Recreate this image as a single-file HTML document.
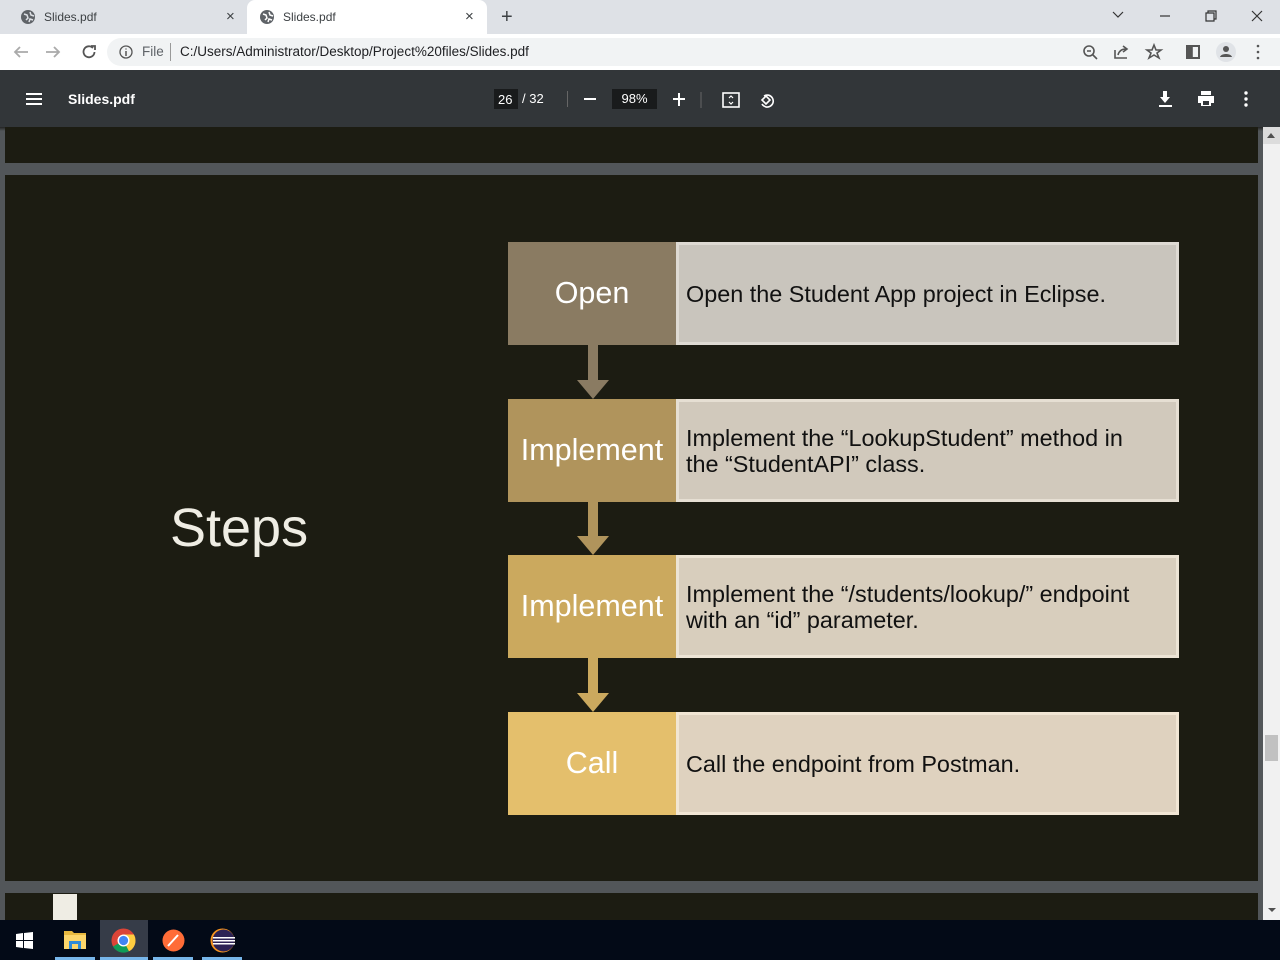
<!DOCTYPE html>
<html><head><meta charset="utf-8"><style>
*{margin:0;padding:0;box-sizing:border-box}
body{width:1280px;height:960px;overflow:hidden;font-family:"Liberation Sans",sans-serif;background:#525659;position:relative}
.abs{position:absolute}
.tabbar{left:0;top:0;width:1280px;height:34px;background:#dee1e6}
.tab{top:0;height:34px;font-size:12px;color:#3c4043;line-height:34px}
.addr{left:0;top:34px;width:1280px;height:36px;background:#fff}
.omni{left:107px;top:38px;width:1200px;height:28px;border-radius:14px;background:#f1f3f4}
.pdfbar{left:0;top:70px;width:1280px;height:57px;background:#323639;color:#fff}
.page{left:5px;background:#1c1c12}
.lbox{left:508px;width:168px;height:103px;color:#fff;font-size:30.5px;text-align:center;display:flex;align-items:center;justify-content:center}
.rbox{left:676px;width:503px;height:103px;border:3px solid;font-size:23.4px;color:#111;display:flex;align-items:center;padding-left:7px;line-height:26px}
.shaft{left:588px;width:10px}
.head{left:577px;width:0;height:0;border-left:16px solid transparent;border-right:16px solid transparent;border-top:19px solid}
.task{left:0;top:920px;width:1280px;height:40px;background:#030a17}
.ul{top:957px;height:3px;background:#77b6ea}
</style></head><body>
<div class="abs tabbar"></div>
<div class="abs" style="left:247px;top:0;width:240px;height:34px;background:#fff;border-radius:8px 8px 0 0"></div>
<svg class="abs" style="left:20px;top:9px" width="16" height="16"><circle cx="8" cy="8" r="7" fill="#5f6368"/><path d="M4 5l3 1 1 3-2 2M10 3l1 3 3 1M9 13l1-3 3 1" stroke="#dee1e6" stroke-width="1.5" fill="none"/></svg>
<div class="abs tab" style="left:44px">Slides.pdf</div>
<div class="abs tab" style="left:226px;font-size:15px">×</div>
<svg class="abs" style="left:259px;top:9px" width="16" height="16"><circle cx="8" cy="8" r="7" fill="#5f6368"/><path d="M4 5l3 1 1 3-2 2M10 3l1 3 3 1M9 13l1-3 3 1" stroke="#fff" stroke-width="1.5" fill="none"/></svg>
<div class="abs tab" style="left:283px">Slides.pdf</div>
<div class="abs tab" style="left:465px;font-size:15px">×</div>
<div class="abs tab" style="left:501px;font-size:20px">+</div>
<svg class="abs" style="left:1110px;top:8px" width="160" height="16" stroke="#333" fill="none" stroke-width="1.2"><path d="M3 4l5 5 5-5"/><path d="M50 8h10"/><path d="M96 5h8v8h-8zM98 5v-2h8v8h-2"/><path d="M142 3l10 10M152 3l-10 10"/></svg>
<div class="abs addr"></div>
<svg class="abs" style="left:12px;top:43px" width="90" height="18" stroke="#aaa" fill="none" stroke-width="1.8"><path d="M16 9H3M8 4L3 9l5 5"/><path d="M34 9h13M42 4l5 5-5 5" /><path d="M81 5a5.5 5.5 0 1 0 1.5 4" stroke="#555"/><path d="M79 3h4v4" stroke="#555"/></svg>
<div class="abs omni"></div>
<svg class="abs" style="left:118px;top:44px" width="16" height="16"><circle cx="8" cy="8" r="6" stroke="#555" fill="none" stroke-width="1.3"/><path d="M8 7v5M8 4.5v1" stroke="#555" stroke-width="1.5"/></svg>
<div class="abs" style="left:142px;top:44px;font-size:13.5px;color:#5f6368">File</div>
<div class="abs" style="left:170px;top:43px;width:1px;height:18px;background:#999"></div>
<div class="abs" style="left:180px;top:44px;font-size:13.5px;color:#202124">C:/Users/Administrator/Desktop/Project%20files/Slides.pdf</div>
<svg class="abs" style="left:1080px;top:42px" width="190" height="20" fill="none" stroke="#555" stroke-width="1.6"><circle cx="9" cy="9" r="5"/><path d="M13 13l4 4M7 9h4"/><path d="M35 8v8h12M38 13c1-4 4-6 8-6M43 4l4 3-4 3"/><path d="M74 3l2 5h5l-4 3 2 5-5-3-5 3 2-5-4-3h5z"/><rect x="107" y="4" width="12" height="12" stroke-width="2"/><rect x="107" y="4" width="5" height="12" fill="#555"/><circle cx="146" cy="10" r="10" fill="#e0e3e7" stroke="none"/><circle cx="146" cy="7" r="3" fill="#555" stroke="none"/><path d="M140 15c1-4 11-4 12 0z" fill="#555" stroke="none"/><circle cx="178" cy="4" r="1.3" fill="#555" stroke="none"/><circle cx="178" cy="10" r="1.3" fill="#555" stroke="none"/><circle cx="178" cy="16" r="1.3" fill="#555" stroke="none"/></svg>
<div class="abs pdfbar"></div>
<svg class="abs" style="left:26px;top:92px" width="16" height="14" fill="#fff"><rect y="1" width="16" height="2"/><rect y="6" width="16" height="2"/><rect y="11" width="16" height="2"/></svg>
<div class="abs" style="left:68px;top:91px;font-size:14px;font-weight:bold;color:#fff">Slides.pdf</div>
<div class="abs" style="left:494px;top:89px;width:24px;height:20px;background:#191b1c"></div>
<div class="abs" style="left:498px;top:92px;font-size:13px;color:#fff">26</div>
<div class="abs" style="left:522px;top:91px;font-size:13px;color:#fff">/ 32</div>
<div class="abs" style="left:567px;top:91px;width:1px;height:16px;background:#666"></div>
<div class="abs" style="left:584px;top:98px;width:12px;height:2px;background:#fff"></div>
<div class="abs" style="left:612px;top:89px;width:45px;height:20px;background:#191b1c;color:#fff;font-size:13px;text-align:center;line-height:20px">98%</div>
<svg class="abs" style="left:672px;top:92px" width="120" height="16" stroke="#fff" fill="none" stroke-width="2"><path d="M7 1v13M1 7h12"/><path d="M29 0v16" stroke="#666" stroke-width="1"/><rect x="51" y="1" width="16" height="14" stroke-width="1.6"/><path d="M57 6l2-2 2 2M57 10l2 2 2-2" stroke-width="1.2"/><path d="M92 4a6 6 0 1 1-2 8" stroke-width="1.6"/><path d="M90 8l4-4 4 4-4 4z" stroke-width="1.6"/></svg>
<svg class="abs" style="left:1158px;top:90px" width="100" height="18" fill="#fff"><path d="M5 1h4v6h3l-5 6-5-6h3z"/><rect x="1" y="15" width="13" height="2"/><rect x="43" y="1" width="10" height="4"/><path d="M40 6h16v7h-3v3h-10v-3h-3z"/><rect x="45" y="11" width="6" height="4" fill="#323639"/><circle cx="88" cy="3" r="1.7"/><circle cx="88" cy="9" r="1.7"/><circle cx="88" cy="15" r="1.7"/></svg>
<div class="abs" style="left:0;top:127px;width:1263px;height:4px;background:linear-gradient(#222,#525659)"></div>
<div class="abs page" style="top:127px;width:1253px;height:36px"></div>
<div class="abs page" style="top:175px;width:1253px;height:706px"></div>
<div class="abs page" style="top:893px;width:1253px;height:27px"></div>
<div class="abs" style="left:53px;top:894px;width:24px;height:26px;background:#efede4"></div>
<div class="abs" style="left:1263px;top:127px;width:17px;height:793px;background:#f1f1f1"></div>
<div class="abs" style="left:1263px;top:127px;width:17px;height:17px;background:#dcdcdc"></div>
<div class="abs" style="left:1267px;top:133px;border-left:4.5px solid transparent;border-right:4.5px solid transparent;border-bottom:5px solid #505050"></div>
<div class="abs" style="left:1265px;top:735px;width:13px;height:26px;background:#c1c1c1"></div>
<div class="abs" style="left:1268px;top:908px;border-left:4px solid transparent;border-right:4px solid transparent;border-top:4px solid #505050"></div>
<div class="abs" style="left:170px;top:497px;font-size:54px;color:#efede4">Steps</div>

<div class="abs lbox" style="top:242px;background:#8a7b62">Open</div>
<div class="abs rbox" style="top:242px;background:#c9c5bd;border-color:#dedad3">Open the Student App project in Eclipse.</div>
<div class="abs shaft" style="top:345px;height:36px;background:#8a7b62"></div>
<div class="abs head" style="top:380px;border-top-color:#8a7b62"></div>

<div class="abs lbox" style="top:399px;background:#b0945c">Implement</div>
<div class="abs rbox" style="top:399px;background:#d1c9bc;border-color:#e6dfd3">Implement the “LookupStudent” method in<br>the “StudentAPI” class.</div>
<div class="abs shaft" style="top:502px;height:35px;background:#b0945c"></div>
<div class="abs head" style="top:536px;border-top-color:#b0945c"></div>

<div class="abs lbox" style="top:555px;background:#cba95e">Implement</div>
<div class="abs rbox" style="top:555px;background:#d8cebd;border-color:#ece4d5">Implement the “/students/lookup/” endpoint<br>with an “id” parameter.</div>
<div class="abs shaft" style="top:658px;height:36px;background:#cba95e"></div>
<div class="abs head" style="top:693px;border-top-color:#cba95e"></div>

<div class="abs lbox" style="top:712px;background:#e4bf6c">Call</div>
<div class="abs rbox" style="top:712px;background:#dfd2bf;border-color:#f1e6d4">Call the endpoint from Postman.</div>

<div class="abs task"></div>
<svg class="abs" style="left:16px;top:932px" width="17" height="17" fill="#fff"><path d="M0 2l7-1v7H0zM8 1l9-1v8H8zM0 9h7v7l-7-1zM8 9h9v8l-9-1z"/></svg>
<svg class="abs" style="left:64px;top:929px" width="22" height="20"><path d="M0 2h8l2 2h12v16H0z" fill="#e8b93f"/><rect x="0" y="6" width="22" height="14" fill="#fcd66b"/><rect x="5" y="12" width="12" height="8" fill="#2f8bd8"/><rect x="8" y="15" width="6" height="5" fill="#fcd66b"/></svg>
<div class="abs" style="left:100px;top:920px;width:48px;height:40px;background:#363c48"></div>
<svg class="abs" style="left:111px;top:928px" width="25" height="25"><circle cx="12.5" cy="12.5" r="12" fill="#db4437"/><path d="M12.5 12.5L2 18.5A12 12 0 0 0 18 23.3z" fill="#0f9d58"/><path d="M12.5 12.5L18 23.3A12 12 0 0 0 24.5 12.5 12 12 0 0 0 22.9 6.5H12.5z" fill="#ffcd40"/><circle cx="12.5" cy="12.5" r="6" fill="#fff"/><circle cx="12.5" cy="12.5" r="4.6" fill="#4285f4"/></svg>
<svg class="abs" style="left:162px;top:929px" width="23" height="23"><circle cx="11.5" cy="11.5" r="11" fill="#ff6c37"/><path d="M6 17l10-11" stroke="#fff" stroke-width="2"/></svg>
<svg class="abs" style="left:210px;top:928px" width="25" height="25"><circle cx="12.5" cy="12.5" r="12" fill="#f7941e"/><circle cx="13.5" cy="12.5" r="11" fill="#2c2255"/><rect x="3" y="9" width="22" height="1.5" fill="#fff"/><rect x="3" y="12" width="22" height="1.5" fill="#fff"/><rect x="3" y="15" width="22" height="1.5" fill="#fff"/></svg>
<div class="abs ul" style="left:55px;width:40px"></div>
<div class="abs ul" style="left:100px;width:48px"></div>
<div class="abs ul" style="left:153px;width:40px"></div>
<div class="abs ul" style="left:202px;width:40px"></div>
</body></html>
